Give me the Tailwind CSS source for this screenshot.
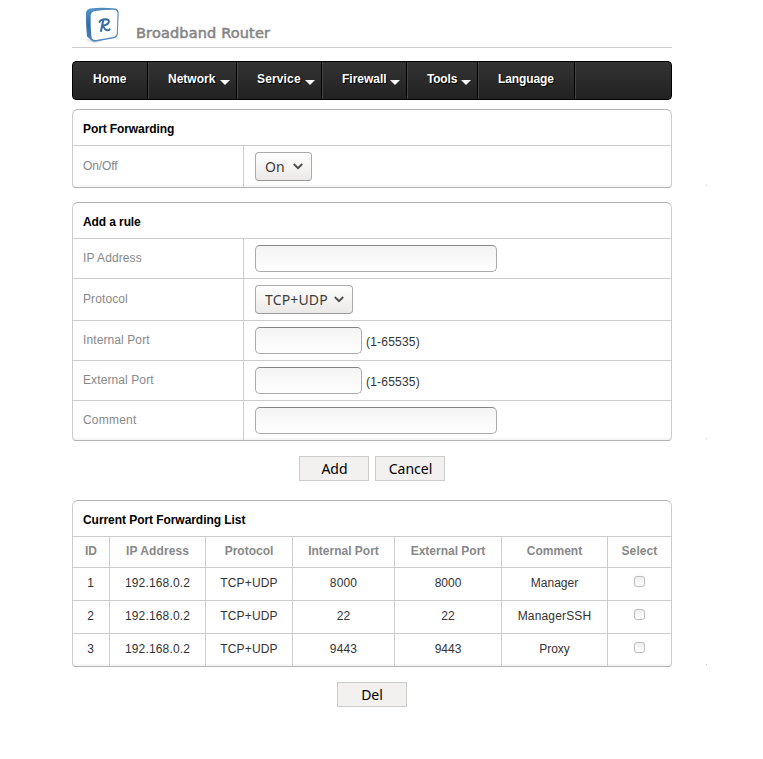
<!DOCTYPE html>
<html lang="en">
<head>
<meta charset="utf-8">
<title>Broadband Router</title>
<script src="https://cdn.jsdelivr.net/npm/@tailwindcss/browser@4"></script>
</head>
<body class="bg-white text-[12px] leading-[14px] text-[#333]" style="font-family:'Liberation Sans',Arial,sans-serif">
<div class="ml-[72px] w-[600px]">
  <header class="flex h-[48px] border-b border-[#ccc] pl-[12px] pt-[5px]">
    <svg class="h-[40px] w-[38px] shrink-0" viewBox="0 0 38 40">
      <defs>
        <linearGradient id="side" x1="0" y1="0" x2="0.3" y2="1"><stop offset="0" stop-color="#5b98cd"/><stop offset=".5" stop-color="#2f6ca7"/><stop offset="1" stop-color="#5289bb"/></linearGradient>
        <linearGradient id="face" x1="0" y1="0" x2="1" y2="1"><stop offset=".7" stop-color="#fff"/><stop offset="1" stop-color="#e4e8ee"/></linearGradient>
      </defs>
      <path d="M2 35L8 33L20 36L10 38Z" fill="#bbb" opacity=".45"/>
      <path d="M6 3.500Q17 2 31 3.500Q34.700 4.300 34.600 8L33.800 29Q33.500 32.500 30 33.300L12 36.600Q9 37.200 7 35L3 31.500Q1.800 17 2 8Q2 4.500 6 3.500Z" fill="url(#side)"/>
      <path d="M10.500 6.200Q20 4.500 30.500 4.800Q33.800 5.300 33.600 9L32.900 28Q32.700 31.200 29.500 32L12 35Q8 35.500 7.500 32Q6.200 21 6.700 10.500Q7 7 10.500 6.200Z" fill="url(#face)"/>
      <path d="M15.500 17Q16.500 14.300 21.500 14.200Q25.500 14.300 24.800 17Q24 20 19 20.500Q20.800 25 23.300 25.300Q25 25.300 25.700 24.400M19.300 14.800L17 26" fill="none" stroke="#376fa6" stroke-width="2" stroke-linecap="round" stroke-linejoin="round"/>
    </svg>
    <h1 class="ml-[14px] mt-[19px] whitespace-nowrap text-[14.500px] leading-[18px] tracking-[0.150px] text-[#858585] [-webkit-text-stroke:0.550px_#858585]" style="font-family:'DejaVu Sans',sans-serif">Broadband Router</h1>
  </header>

  <nav class="mt-[13px] flex h-[39px] rounded-[4px] border border-black bg-linear-to-b from-[#333] to-[#222] font-bold text-white [text-shadow:1px_1px_0_#000]">
    <a class="h-[37px] w-[75px] border-r border-r-black pl-[20px] pt-[10px]">Home</a>
    <a class="flex h-[37px] w-[89px] border-x border-l-[#444] border-r-black pl-[19px] pt-[10px]">Network<svg class="ml-auto mr-[6px] mt-[8px] h-[5px] w-[10px]"><path d="M0 0H10L5 5Z" fill="#fff"/></svg></a>
    <a class="flex h-[37px] w-[85px] border-x border-l-[#444] border-r-black pl-[19px] pt-[10px]"><span class="tracking-[0.150px]">Service</span><svg class="ml-auto mr-[6px] mt-[8px] h-[5px] w-[10px]"><path d="M0 0H10L5 5Z" fill="#fff"/></svg></a>
    <a class="flex h-[37px] w-[85px] border-x border-l-[#444] border-r-black pl-[19px] pt-[10px]">Firewall<svg class="ml-auto mr-[6px] mt-[8px] h-[5px] w-[10px]"><path d="M0 0H10L5 5Z" fill="#fff"/></svg></a>
    <a class="flex h-[37px] w-[71px] border-x border-l-[#444] border-r-black pl-[19px] pt-[10px] tracking-[-0.200px]">Tools<svg class="ml-auto mr-[6px] mt-[8px] h-[5px] w-[10px]"><path d="M0 0H10L5 5Z" fill="#fff"/></svg></a>
    <a class="h-[37px] w-[97px] border-x border-l-[#444] border-r-black pl-[19px] pt-[10px] tracking-[-0.100px]">Language</a>
    <span class="h-[37px] w-px bg-[#444]"></span>
  </nav>

  <section class="relative mt-[9px] h-[79px] rounded-t-[6px] rounded-b-[4px] border border-[#ccc] border-y-[#b3b3b3] shadow-[inset_0_-2px_0_#f6f6f6]">
    <h2 class="h-[36px] border-b border-[#ccc] pl-[10px] pt-[12px] font-bold tracking-[-0.100px] text-black">Port Forwarding</h2>
    <div class="flex h-[41px]">
      <label class="w-[171px] border-r border-[#ccc] pl-[10px] pt-[13px] tracking-[-0.100px] text-[#888]">On/Off</label>
      <div class="pl-[11px] pt-[6px]">
        <div class="flex h-[29px] w-[57px] items-center justify-between rounded-[4px] border border-[#aaa] border-b-[#999] bg-linear-to-b from-white to-[#ebe9e7] pl-[9px] pr-[8px] text-[14px] text-[#3c3c3c]" style="font-family:'Noto Sans',sans-serif">On<svg class="h-[7px] w-[10px]" viewBox="0 0 10 7"><path d="M.8 1L5 5.200L9.200 1" fill="none" stroke="#4c4c4c" stroke-width="1.800"/></svg></div>
      </div>
    </div>
    <i class="absolute left-[633px] top-[75px] size-px bg-[#ccc]"></i>
  </section>

  <section class="relative mt-[14px] h-[239px] rounded-t-[6px] rounded-b-[4px] border border-[#ccc] border-y-[#b3b3b3] shadow-[inset_0_-2px_0_#f6f6f6]">
    <h2 class="h-[36px] border-b border-[#ccc] pl-[10px] pt-[12px] font-bold tracking-[-0.100px] text-black">Add a rule</h2>
    <div class="flex h-[40px] border-b border-[#ccc]">
      <label class="w-[171px] border-r border-[#ccc] pl-[10px] pt-[12px] tracking-[0.100px] text-[#888]">IP Address</label>
      <div class="pl-[11px] pt-[6px]"><input class="block h-[27px] w-[242px] rounded-[5px] border border-[#aaa] border-t-[#888] bg-linear-to-b from-[#f3f3f3] to-white"></div>
    </div>
    <div class="flex h-[42px] border-b border-[#ccc]">
      <label class="w-[171px] border-r border-[#ccc] pl-[10px] pt-[13px] tracking-[0.100px] text-[#888]">Protocol</label>
      <div class="pl-[11px] pt-[6px]">
        <div class="flex h-[29px] w-[98px] items-center justify-between rounded-[4px] border border-[#aaa] border-b-[#999] bg-linear-to-b from-white to-[#ebe9e7] pl-[9px] pr-[8px] text-[14px] tracking-[0.150px] text-[#3c3c3c]" style="font-family:'Noto Sans',sans-serif">TCP+UDP<svg class="h-[7px] w-[10px]" viewBox="0 0 10 7"><path d="M.8 1L5 5.200L9.200 1" fill="none" stroke="#4c4c4c" stroke-width="1.800"/></svg></div>
      </div>
    </div>
    <div class="flex h-[40px] border-b border-[#ccc]">
      <label class="w-[171px] border-r border-[#ccc] pl-[10px] pt-[12px] tracking-[0.100px] text-[#888]">Internal Port</label>
      <div class="flex pl-[11px] pt-[6px]"><input class="block h-[27px] w-[107px] rounded-[5px] border border-[#aaa] border-t-[#888] bg-linear-to-b from-[#f3f3f3] to-white"><span class="ml-[4px] mt-[8px] tracking-[0.200px]">(1-65535)</span></div>
    </div>
    <div class="flex h-[40px] border-b border-[#ccc]">
      <label class="w-[171px] border-r border-[#ccc] pl-[10px] pt-[12px] tracking-[0.100px] text-[#888]">External Port</label>
      <div class="flex pl-[11px] pt-[6px]"><input class="block h-[27px] w-[107px] rounded-[5px] border border-[#aaa] border-t-[#888] bg-linear-to-b from-[#f3f3f3] to-white"><span class="ml-[4px] mt-[8px] tracking-[0.200px]">(1-65535)</span></div>
    </div>
    <div class="flex h-[39px]">
      <label class="w-[171px] border-r border-[#ccc] pl-[10px] pt-[12px] tracking-[0.200px] text-[#888]">Comment</label>
      <div class="pl-[11px] pt-[6px]"><input class="block h-[27px] w-[242px] rounded-[5px] border border-[#aaa] border-t-[#888] bg-linear-to-b from-[#f3f3f3] to-white"></div>
    </div>
    <i class="absolute left-[633px] top-[235px] size-px bg-[#ccc]"></i>
  </section>

  <div class="mt-[15px] flex justify-center gap-[6px] text-[14px] text-black" style="font-family:'Noto Sans',sans-serif">
    <button class="h-[25px] w-[70px] border border-[#ccc] bg-[#f2f1f0] pl-[1px] leading-[23px]">Add</button>
    <button class="h-[25px] w-[70px] border border-[#ccc] bg-[#f2f1f0] pl-[1px] leading-[23px]">Cancel</button>
  </div>

  <section class="relative mt-[19px] h-[167px] rounded-t-[6px] rounded-b-[4px] border border-[#ccc] border-y-[#b3b3b3] shadow-[inset_0_-2px_0_#f6f6f6]">
    <h2 class="h-[36px] border-b border-[#ccc] pl-[10px] pt-[12px] font-bold tracking-[-0.060px] text-black">Current Port Forwarding List</h2>
    <div class="grid h-[31px] grid-cols-[37px_96px_87px_102px_107px_106px_63px] border-b border-[#ccc] text-center font-bold text-[#888] *:border-r *:border-[#ccc] *:pt-[7px] *:last:border-r-0">
      <span>ID</span><span class="tracking-[0.100px]">IP Address</span><span>Protocol</span><span>Internal Port</span><span>External Port</span><span>Comment</span><span class="tracking-[0.100px]">Select</span>
    </div>
    <div class="grid h-[33px] grid-cols-[37px_96px_87px_102px_107px_106px_63px] border-b border-[#ccc] text-center *:border-r *:border-[#ccc] *:pt-[8px] *:last:border-r-0">
      <span class="pr-[1px]">1</span><span class="tracking-[0.150px]">192.168.0.2</span><span class="tracking-[0.150px]">TCP+UDP</span><span class="tracking-[0.150px]">8000</span><span>8000</span><span>Manager</span><span><i class="mx-auto block size-[11px] rounded-[3px] border border-[#c0c0c0] bg-linear-to-b from-[#eee] to-white shadow-[0_0_1px_#ccc]"></i></span>
    </div>
    <div class="grid h-[33px] grid-cols-[37px_96px_87px_102px_107px_106px_63px] border-b border-[#ccc] text-center *:border-r *:border-[#ccc] *:pt-[8px] *:last:border-r-0">
      <span class="pr-[1px]">2</span><span class="tracking-[0.150px]">192.168.0.2</span><span class="tracking-[0.150px]">TCP+UDP</span><span>22</span><span>22</span><span class="tracking-[0.150px]">ManagerSSH</span><span><i class="mx-auto block size-[11px] rounded-[3px] border border-[#c0c0c0] bg-linear-to-b from-[#eee] to-white shadow-[0_0_1px_#ccc]"></i></span>
    </div>
    <div class="grid h-[32px] grid-cols-[37px_96px_87px_102px_107px_106px_63px] text-center *:border-r *:border-[#ccc] *:pt-[8px] *:last:border-r-0">
      <span class="pr-[1px]">3</span><span class="tracking-[0.150px]">192.168.0.2</span><span class="tracking-[0.150px]">TCP+UDP</span><span class="tracking-[0.150px]">9443</span><span>9443</span><span>Proxy</span><span><i class="mx-auto block size-[11px] rounded-[3px] border border-[#c0c0c0] bg-linear-to-b from-[#eee] to-white shadow-[0_0_1px_#ccc]"></i></span>
    </div>
    <i class="absolute left-[633px] top-[163px] size-px bg-[#ccc]"></i>
  </section>

  <div class="mt-[15px] flex justify-center text-[14px] text-black" style="font-family:'Noto Sans',sans-serif">
    <button class="h-[25px] w-[70px] border border-[#ccc] bg-[#f2f1f0] leading-[23px]">Del</button>
  </div>
</div>
</body>
</html>
